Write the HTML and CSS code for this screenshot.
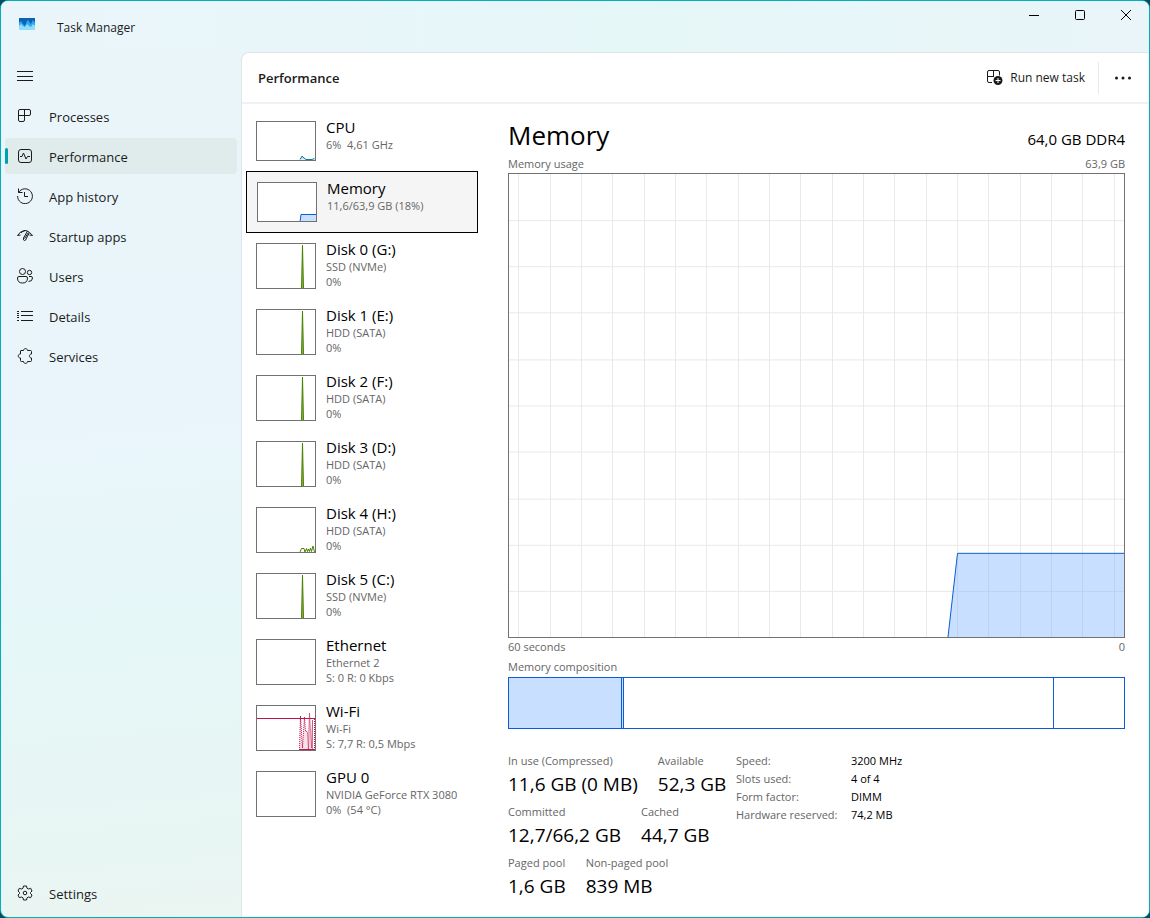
FILE: index.html
```html
<!DOCTYPE html>
<html lang="en">
<head>
<meta charset="utf-8">
<title>Task Manager</title>
<link rel="stylesheet" href="styles.css">
</head>
<body>
<div class="window">
  <header class="titlebar">
    <svg class="app-icon" width="16" height="12" viewBox="0 0 16 12" aria-hidden="true">
      <rect width="16" height="12" fill="#0a63b8"/>
      <path d="M0 5L2 3L4 6L6 8L8 3L9 2L11 5L12 6L14 2L16 5V12H0z" fill="#2fa8ee"/>
      <path d="M0 8L2 6L4 8L6 9L8 6L10 8L12 9L14 6L16 8V12H0z" fill="#8fdcfb"/>
    </svg>
    <span class="title">Task Manager</span>
    <div class="caption-buttons">
      <button type="button" aria-label="Minimize"><svg width="12" height="12" viewBox="0 0 12 12"><path d="M1 6.5H11"/></svg></button>
      <button type="button" aria-label="Maximize"><svg width="12" height="12" viewBox="0 0 12 12"><rect x="1.5" y="1.5" width="9" height="9" rx="1"/></svg></button>
      <button type="button" aria-label="Close"><svg width="12" height="12" viewBox="0 0 12 12"><path d="M1 1L11 11M11 1L1 11"/></svg></button>
    </div>
  </header>

  <nav class="sidebar">
    <button type="button" class="nav-item menu" aria-label="Toggle navigation"><svg width="16" height="16" viewBox="0 0 16 16"><path d="M0 3.5H16M0 8.5H16M0 12.5H16"/></svg></button>
    <button type="button" class="nav-item"><svg width="16" height="16" viewBox="0 0 16 16"><path d="M3 1.500H12Q13.500 1.500 13.500 3V6Q13.500 7.500 12 7.500H1.500M7.500 1.500V12Q7.500 13.500 6 13.500H3Q1.500 13.500 1.500 12V3Q1.500 1.500 3 1.500"/></svg>Processes</button>
    <button type="button" class="nav-item active" aria-current="page"><svg width="16" height="16" viewBox="0 0 16 16"><rect x="1.500" y="1.500" width="13" height="13" rx="2.500"/><path d="M3 8.500H5L6.500 5L9 11L10.500 8.500H13"/></svg>Performance</button>
    <button type="button" class="nav-item"><svg width="16" height="16" viewBox="0 0 16 16"><path d="M1.500 0.500V4.500H5.500M1.600 4.500A7.400 7.400 0 1 1 0.600 8M7.500 4V8.500H11"/></svg>App history</button>
    <button type="button" class="nav-item"><svg width="16" height="16" viewBox="0 0 16 16"><path d="M0.500 7.500Q3 3 8 2.500M0.500 7.500L3.500 7M4 5Q5.500 3 8 2.500L10.500 3M13 5Q14.500 6 15.500 7.500L12.500 7M10.500 3L6.500 10Q6 12.500 7.500 12.500Q9 12.500 9 11L12.500 4.500Q12 3.500 10.500 3.500M7.500 10.500L11.500 4.500"/></svg>Startup apps</button>
    <button type="button" class="nav-item"><svg width="16" height="16" viewBox="0 0 16 16"><circle cx="5.500" cy="3.500" r="3"/><circle cx="12.500" cy="4.500" r="2.200"/><path d="M2 8.500H9Q10.500 8.500 10.500 10Q10.500 15 5.500 15Q.5 15 .5 10Q.5 8.500 2 8.500zM12 8.500H14Q15.500 8.500 15.500 10Q15.500 13.500 11.500 13.500"/></svg>Users</button>
    <button type="button" class="nav-item"><svg width="16" height="16" viewBox="0 0 16 16"><path d="M0 3.500H2M4 3.500H16M0 7.500H2M4 7.500H16M0 12.500H2M4 12.500H16M0 5.500H2M0 9.500H2"/></svg>Details</button>
    <button type="button" class="nav-item"><svg width="16" height="16" viewBox="0 0 16 16"><path d="M4 2.500H6.500C6.500 0 10.500 0 10.500 2.500H13.500Q14.500 2.500 14.500 3.500V6C11.800 6 11.800 10 14.500 10V12.500Q14.500 13.500 13.500 13.500H10.500C10.500 16 6.500 16 6.500 13.500H4.500Q3.500 13.500 3.500 12.500V10C.5 10 .5 6 3.500 6V3Q3.500 2.500 4 2.500z"/></svg>Services</button>
    <button type="button" class="nav-item settings"><svg width="16" height="16" viewBox="0 0 16 16"><circle cx="8" cy="8" r="1.800"/><path d="M6.500 1H9.500L10 3.200L11.500 4L13.700 3.300L15 6L13.500 7.500V8.500L15 10L13.700 12.700L11.500 12L10 12.800L9.500 15H6.500L6 12.800L4.500 12L2.300 12.700L1 10L2.500 8.500V7.500L1 6L2.300 3.300L4.500 4L6 3.200z"/></svg>Settings</button>
  </nav>

  <main class="main">
    <div class="commandbar">
      <h1>Performance</h1>
      <button type="button" class="run-task">
        <svg width="16" height="16" viewBox="0 0 16 16"><path d="M12.500 5.500V2Q12.500 .5 11 .5H2Q.5 .5 .5 2V11Q.5 12.500 2 12.500H5M.5 6.500H7M6.500 .5V6.500"/><circle class="solid" cx="11" cy="10.500" r="4.500"/><path class="plus" d="M11 8V13M8.500 10.500H13.500"/></svg>
        Run new task
      </button>
      <button type="button" class="more" aria-label="More options"><svg width="16" height="4" viewBox="0 0 16 4"><g class="solid"><circle cx="1.500" cy="2" r="1.500"/><circle cx="8" cy="2" r="1.500"/><circle cx="14.500" cy="2" r="1.500"/></g></svg></button>
    </div>

    <div class="content">
      <div class="resources">
        <button type="button" class="resource">
          <svg class="thumb short" viewBox="0 0 58 38"><path class="cpu" d="M43 37.500L45 34L47 36L49 37.500H55L57 36.500L58 37.500"/></svg>
          <span class="label"><span class="name">CPU</span><span class="sub">6%&nbsp; 4,61 GHz</span></span>
        </button>
        <button type="button" class="resource selected">
          <svg class="thumb short" viewBox="0 0 58 38"><path class="mem" d="M42 39L43 31.500H59V39z"/></svg>
          <span class="label"><span class="name">Memory</span><span class="sub">11,6/63,9 GB (18%)</span></span>
        </button>
        <button type="button" class="resource">
          <svg class="thumb" viewBox="0 0 58 44"><path class="disk" d="M44.500 45L45.500 1L46.500 45z"/></svg>
          <span class="label"><span class="name">Disk 0 (G:)</span><span class="sub">SSD (NVMe)</span><span class="sub">0%</span></span>
        </button>
        <button type="button" class="resource">
          <svg class="thumb" viewBox="0 0 58 44"><path class="disk" d="M44.500 45L45.500 1L46.500 45z"/></svg>
          <span class="label"><span class="name">Disk 1 (E:)</span><span class="sub">HDD (SATA)</span><span class="sub">0%</span></span>
        </button>
        <button type="button" class="resource">
          <svg class="thumb" viewBox="0 0 58 44"><path class="disk" d="M44.500 45L45.500 1L46.500 45z"/></svg>
          <span class="label"><span class="name">Disk 2 (F:)</span><span class="sub">HDD (SATA)</span><span class="sub">0%</span></span>
        </button>
        <button type="button" class="resource">
          <svg class="thumb" viewBox="0 0 58 44"><path class="disk" d="M44.500 45L45.500 1L46.500 45z"/></svg>
          <span class="label"><span class="name">Disk 3 (D:)</span><span class="sub">HDD (SATA)</span><span class="sub">0%</span></span>
        </button>
        <button type="button" class="resource">
          <svg class="thumb" viewBox="0 0 58 44"><path class="disk line" d="M43 44L44.500 40.500H47L48 44L49.500 40.500L50.500 43.500L51.500 41L52.500 43.500L53.500 40L54.500 43.500L56 38L57.500 44"/></svg>
          <span class="label"><span class="name">Disk 4 (H:)</span><span class="sub">HDD (SATA)</span><span class="sub">0%</span></span>
        </button>
        <button type="button" class="resource">
          <svg class="thumb" viewBox="0 0 58 44"><path class="disk" d="M44.500 45L45.500 1L46.500 45z"/></svg>
          <span class="label"><span class="name">Disk 5 (C:)</span><span class="sub">SSD (NVMe)</span><span class="sub">0%</span></span>
        </button>
        <button type="button" class="resource">
          <svg class="thumb" viewBox="0 0 58 44"></svg>
          <span class="label"><span class="name">Ethernet</span><span class="sub">Ethernet 2</span><span class="sub">S: 0 R: 0 Kbps</span></span>
        </button>
        <button type="button" class="resource">
          <svg class="thumb" viewBox="0 0 58 44"><path class="net fill" d="M42 44L43.500 10L45.500 44L47.500 11L48.500 24L50.500 26L52.500 7L54.500 42L56 14V44z"/><path class="net dots" d="M42.500 44L43.500 10L45.500 42L47.500 11L48.500 25L50.500 26L51.500 44L52.500 7L54.500 42L55.500 14V44M57.500 13V44"/><path class="net" d="M0 12.500H58M43 43.500H58"/></svg>
          <span class="label"><span class="name">Wi-Fi</span><span class="sub">Wi-Fi</span><span class="sub">S: 7,7 R: 0,5 Mbps</span></span>
        </button>
        <button type="button" class="resource">
          <svg class="thumb" viewBox="0 0 58 44"></svg>
          <span class="label"><span class="name">GPU 0</span><span class="sub">NVIDIA GeForce RTX 3080</span><span class="sub">0%&nbsp; (54 °C)</span></span>
        </button>
      </div>

      <section class="detail">
        <div class="detail-head"><h2>Memory</h2><span class="capacity">64,0 GB DDR4</span></div>
        <div class="caption usage-title"><span>Memory usage</span><span>63,9 GB</span></div>
        <div class="chart">
          <svg viewBox="0 0 615 462" preserveAspectRatio="none" aria-label="Memory usage over 60 seconds">
            <path class="grid" d="M9.500 0V462M41.500 0V462M72.500 0V462M103.500 0V462M135.500 0V462M166.500 0V462M197.500 0V462M229.500 0V462M260.500 0V462M291.500 0V462M323.500 0V462M354.500 0V462M385.500 0V462M417.500 0V462M448.500 0V462M479.500 0V462M511.500 0V462M542.500 0V462M573.500 0V462M605.500 0V462M0 46.500H615M0 92.500H615M0 138.500H615M0 185.500H615M0 231.500H615M0 277.500H615M0 324.500H615M0 370.500H615M0 416.500H615"/>
            <path class="usage-fill" d="M439 462L448.500 378.500H615V462z"/>
            <path class="usage-line" d="M439 462L448.500 378.500H615"/>
          </svg>
        </div>
        <div class="caption"><span>60 seconds</span><span>0</span></div>
        <div class="caption comp-title"><span>Memory composition</span></div>
        <div class="composition"><span class="in-use"></span><span class="modified"></span><span class="standby"></span><span class="free"></span></div>
        <div class="figures">
          <div class="stats">
            <dl><div><dt>In use (Compressed)</dt><dd>11,6 GB (0 MB)</dd></div><div><dt>Available</dt><dd>52,3 GB</dd></div></dl>
            <dl><div><dt>Committed</dt><dd>12,7/66,2 GB</dd></div><div><dt>Cached</dt><dd>44,7 GB</dd></div></dl>
            <dl><div><dt>Paged pool</dt><dd>1,6 GB</dd></div><div><dt>Non-paged pool</dt><dd>839 MB</dd></div></dl>
          </div>
          <table class="specs">
            <tr><th scope="row">Speed:</th><td>3200 MHz</td></tr>
            <tr><th scope="row">Slots used:</th><td>4 of 4</td></tr>
            <tr><th scope="row">Form factor:</th><td>DIMM</td></tr>
            <tr><th scope="row">Hardware reserved:</th><td>74,2 MB</td></tr>
          </table>
        </div>
      </section>
    </div>
  </main>
</div>
</body>
</html>
```
FILE: styles.css
```css
* { box-sizing: border-box; }
body {
  margin: 0;
  background: #0a4a58;
  font-family: "Open Sans", "Noto Sans", sans-serif;
  font-size: 12px;
  color: #1b1b1b;
}
h1, h2, dl, dd { margin: 0; font-weight: 400; }
button {
  font: inherit;
  color: inherit;
  background: none;
  border: 0;
  padding: 0;
  text-align: left;
}
svg { flex: none; fill: none; stroke: #1b1b1b; stroke-width: 1; }
svg .solid { fill: #1b1b1b; stroke: none; }
svg .plus { stroke: #fff; }

.window {
  min-height: 100vh;
  display: grid;
  grid-template: 51px 1fr / 240px minmax(0, 1fr);
  border: 1px solid #00b0be;
  border-radius: 8px;
  overflow: hidden;
  background: linear-gradient(175deg, #eaf5fa 0%, #eaf5fb 40%, #e6f7f8 62%, #e8f6f3 85%, #eff4f1 100%);
}

.titlebar {
  grid-column: 1 / -1;
  display: flex;
  align-items: center;
  padding-left: 18px;
  background: linear-gradient(90deg, #eaf5fa, #e6f7f8 55%, #e9f5f8);
}
.app-icon { stroke: none; margin-bottom: 6px; }
.title { margin-left: 22px; padding-top: 2px; }
.caption-buttons { display: flex; margin-left: auto; align-self: flex-start; }
.caption-buttons button {
  width: 46px;
  height: 28px;
  display: flex;
  align-items: center;
  justify-content: center;
}
.caption-buttons svg { stroke: #000; }

.sidebar {
  display: flex;
  flex-direction: column;
  gap: 4px;
  padding: 6px 4px;
}
.nav-item {
  position: relative;
  display: flex;
  align-items: center;
  gap: 16px;
  height: 36px;
  padding: 2px 12px 0;
  border-radius: 4px;
  font-size: 13px;
}
.nav-item svg { margin-bottom: 2px; }
.nav-item.active { background: #e0ebec; }
.nav-item.active::before {
  content: "";
  position: absolute;
  left: 0;
  top: 10px;
  width: 3px;
  height: 16px;
  border-radius: 2px;
  background: #009fae;
}
.settings { margin-top: auto; }

.main {
  display: flex;
  flex-direction: column;
  background: #fff;
  border: solid #dde7ea;
  border-width: 1px 0 0 1px;
  border-radius: 8px 0 0 0;
}
.commandbar {
  display: flex;
  align-items: center;
  height: 51px;
  border-bottom: 2px solid #edf2f3;
  padding-left: 16px;
}
.commandbar h1 { font-size: 13px; font-weight: 600; }
.run-task {
  display: flex;
  align-items: center;
  gap: 7px;
  margin-left: auto;
  padding-right: 13px;
}
.more {
  display: flex;
  align-items: center;
  justify-content: center;
  width: 51px;
  height: 32px;
  padding-right: 2px;
  border-left: 1px solid #e8e8e8;
}

.content {
  flex: 1;
  display: flex;
  gap: 30px;
  padding: 7px 24px 12px 4px;
  color: #000;
}
.resources { width: 232px; flex: none; }
.resource {
  display: flex;
  gap: 10px;
  width: 100%;
  padding: 10px;
}
.resource.selected { background: #f5f5f5; border: 1px solid #000; }
.thumb { width: 60px; height: 46px; border: 1px solid #717171; background: #fff; }
.thumb.short { height: 40px; }
.label { display: flex; flex-direction: column; margin-top: -4px; height: 44px; }
.short + .label { height: 40px; }
.name { font-size: 15px; line-height: 20px; }
.sub { font-size: 11px; line-height: 15px; color: #666; white-space: nowrap; }
.cpu { stroke: #117d9b; fill: #bfe0ea; }
.mem { stroke: #0b5cd6; fill: #c9dfff; }
.disk { stroke: #4b8000; fill: #8fb35c; }
.disk.line { fill: none; }
.net { stroke: #c0134e; }
.net.fill { stroke: none; fill: #f8e0e8; }
.net.dots { stroke-dasharray: 1 1; }

.detail { flex: 1; min-width: 0; display: flex; flex-direction: column; }
.detail-head {
  display: flex;
  align-items: flex-end;
  justify-content: space-between;
  height: 44px;
}
.detail-head h2 { font-size: 26px; line-height: 40px; }
.capacity { font-size: 15px; line-height: 32px; }
.caption {
  display: flex;
  justify-content: space-between;
  font-size: 11px;
  line-height: 17px;
  color: #666;
}
.usage-title { padding-bottom: 1px; }
.comp-title { margin-top: 2px; line-height: 20px; }
.chart { flex: 1; min-height: 200px; border: 1px solid #717171; position: relative; }
.chart svg { position: absolute; width: 100%; height: 100%; }
.chart path { vector-effect: non-scaling-stroke; }
.grid { stroke: #e9e9e9; }
.usage-fill { fill: #79aeff; fill-opacity: .4; stroke: none; }
.usage-line { stroke: #0b5cd6; }
.composition { display: flex; height: 52px; border: 1px solid #0b5cd6; }
.composition span + span { border-left: 1px solid #0b5cd6; }
.in-use { flex: 112; background: #c9dfff; }
.modified { width: 2px; background: #c9dfff; }
.standby { flex: 430; }
.free { flex: 70; }

.figures { display: flex; gap: 12px; padding-top: 23px; }
.stats { display: flex; flex-direction: column; width: 216px; }
.stats dl { display: flex; gap: 20px; height: 51px; white-space: nowrap; }
.stats dt { font-size: 11px; line-height: 17px; color: #666; }
.stats dd { font-size: 19px; line-height: 30px; }
.specs { border-collapse: collapse; font-size: 11px; align-self: flex-start; }
.specs th, .specs td { padding: 0; height: 18px; line-height: 18px; text-align: left; font-weight: 400; white-space: nowrap; }
.specs th { color: #666; width: 115px; }
```
